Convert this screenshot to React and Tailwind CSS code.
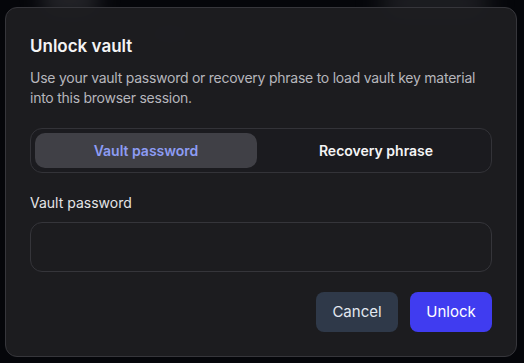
import React, { useState } from "react";

export default function App() {
  const [mode, setMode] = useState("password");
  const [senha, setSenha] = useState("");

  return (
    <div
      className="relative w-[524px] h-[363px] overflow-hidden bg-[#05060a] pl-[5px] pt-[7px]"
      style={{ fontFamily: "Inter, 'Noto Sans', sans-serif" }}
    >
      {/* blurred page content behind the overlay */}
      <div className="absolute left-[40px] -top-[14px] w-[60px] h-[30px] rounded-full bg-[#3a3a3f] blur-[10px] opacity-60"></div>
      <div className="absolute left-[380px] -top-[14px] w-[110px] h-[34px] rounded-full bg-[#3a3a3f] blur-[12px] opacity-50"></div>
      <div className="absolute left-[150px] top-[26px] w-[40px] h-[16px] rounded-full bg-[#34343a] blur-[8px] opacity-40"></div>

      <div className="relative w-[512px] rounded-xl border border-[#36363b] bg-[#1e1e21]/95 p-6">
        <h2 className="text-[17px] leading-7 font-semibold text-[#f4f4f5]">
          Unlock vault
        </h2>
        <p className="mt-2 text-sm leading-5 tracking-[-0.25px] text-[#b6b6bc]">
          Use your vault password or recovery phrase to load vault key material
          <br />
          into this browser session.
        </p>

        <div className="mt-5 grid grid-cols-2 gap-2 rounded-xl border border-[#333338] bg-[#1b1b1f] p-1">
          <button
            onClick={() => setMode("password")}
            className={
              mode === "password"
                ? "h-[35px] rounded-[10px] bg-[#404046] text-sm font-semibold text-[#8d9cf4]"
                : "h-[35px] rounded-[10px] text-sm font-semibold text-[#f4f4f5]"
            }
          >
            Vault password
          </button>
          <button
            onClick={() => setMode("recovery")}
            className={
              mode === "recovery"
                ? "h-[35px] rounded-[10px] bg-[#404046] text-sm font-semibold text-[#8d9cf4]"
                : "h-[35px] rounded-[10px] text-sm font-semibold text-[#f4f4f5]"
            }
          >
            Recovery phrase
          </button>
        </div>

        <label className="mt-5 block text-sm leading-5 font-normal text-[#e4e4e7]">
          {mode === "password" ? "Vault password" : "Recovery phrase"}
        </label>
        <input
          type="password"
          value={senha}
          onChange={(e) => setSenha(e.target.value)}
          className="mt-[9px] block h-[50px] w-full rounded-xl border border-[#35353a] bg-[#1c1c1f] px-4 text-base text-white outline-none"
        />

        <div className="mt-5 flex justify-end gap-3">
          <button className="h-10 w-[82px] rounded-lg bg-[#2f3949] text-[15px] text-[#e2e8f0]">
            Cancel
          </button>
          <button className="h-10 w-[82px] rounded-lg bg-[#403cf0] text-[15px] text-white">
            Unlock
          </button>
        </div>
      </div>
    </div>
  );
}
